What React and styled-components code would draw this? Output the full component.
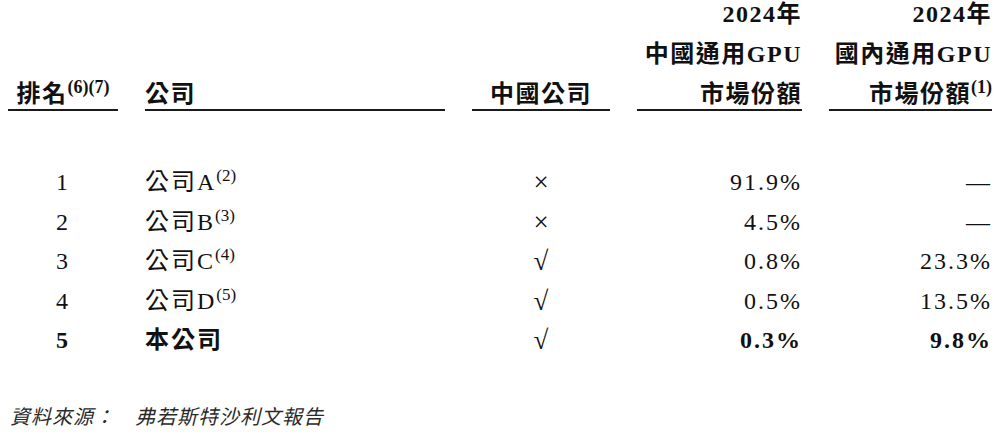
import styled, { createGlobalStyle } from "styled-components"

const GlobalStyle = createGlobalStyle`
    html, body {
        margin: 0;
        padding: 0;
        background: #ffffff;
    }
    body {
        font-family: "Liberation Serif", "Noto Sans CJK TC", serif;
        color: #111111;
    }
`

const columns = "110px 300px 138px 165px 163px"

const rows = [
    { rank: "1", name: "公司A", note: "(2)", mark: "×", china: "91.9%", domestic: "—" },
    { rank: "2", name: "公司B", note: "(3)", mark: "×", china: "4.5%", domestic: "—" },
    { rank: "3", name: "公司C", note: "(4)", mark: "√", china: "0.8%", domestic: "23.3%" },
    { rank: "4", name: "公司D", note: "(5)", mark: "√", china: "0.5%", domestic: "13.5%" },
    { rank: "5", name: "本公司", mark: "√", china: "0.3%", domestic: "9.8%", bold: true },
]

export default function App() {
    return (
        <>
            <GlobalStyle />
            <Page>
                <HeadRow>
                    <HeadCell $align="center">
                        <HeadLine>排名<Sup $head>(6)(7)</Sup></HeadLine>
                    </HeadCell>
                    <HeadCell $align="left">
                        <HeadLine>公司</HeadLine>
                    </HeadCell>
                    <HeadCell $align="center">
                        <HeadLine>中國公司</HeadLine>
                    </HeadCell>
                    <HeadCell $align="right">
                        <HeadLine>2024年</HeadLine>
                        <HeadLine>中國通用GPU</HeadLine>
                        <HeadLine>市場份額</HeadLine>
                    </HeadCell>
                    <HeadCell $align="right">
                        <HeadLine>2024年</HeadLine>
                        <HeadLine>國內通用GPU</HeadLine>
                        <HeadLine>市場份額<Sup $head>(1)</Sup></HeadLine>
                    </HeadCell>
                </HeadRow>
                <Body>
                    {rows.map((r) => (
                        <Row key={r.rank}>
                            <Cell $align="center" $bold={r.bold}>{r.rank}</Cell>
                            <Cell $align="left" $bold={r.bold}>
                                {r.name}
                                {r.note && <Sup>{r.note}</Sup>}
                            </Cell>
                            <Mark>{r.mark}</Mark>
                            <Cell $align="right" $bold={r.bold}>{r.china}</Cell>
                            <Cell $align="right" $bold={r.bold}>{r.domestic}</Cell>
                        </Row>
                    ))}
                </Body>
                <Source>
                    資料來源：<SourceName>弗若斯特沙利文報告</SourceName>
                </Source>
            </Page>
        </>
    )
}

const Page = styled.div`
    width: 1000px;
    height: 444px;
    padding: 0 8px;
    box-sizing: border-box;
    overflow: hidden;
`

const HeadRow = styled.div`
    display: grid;
    grid-template-columns: ${columns};
    column-gap: 27px;
    align-items: end;
    margin-top: -6px;
`

const HeadCell = styled.div`
    display: flex;
    flex-direction: column;
    align-items: ${({ $align }) =>
        $align === "right" ? "flex-end" : $align === "center" ? "center" : "flex-start"};
    border-bottom: 2px solid #1a1a1a;

    & > :last-child {
        margin-bottom: -5px;
    }
`

const HeadLine = styled.span`
    display: block;
    font-size: 24px;
    font-weight: bold;
    line-height: 40px;
    letter-spacing: 1.5px;
    white-space: nowrap;
`

const Sup = styled.sup`
    font-size: ${({ $head }) => ($head ? "18px" : "17px")};
    font-weight: ${({ $head }) => ($head ? "bold" : "normal")};
    letter-spacing: 0;
    line-height: 0;
    vertical-align: 0;
    position: relative;
    top: -9px;
    margin-left: 0;
`

const Body = styled.div`
    padding-top: 52px;
`

const Row = styled.div`
    display: grid;
    grid-template-columns: ${columns};
    column-gap: 27px;
    height: 39.5px;
`

const Cell = styled.div`
    text-align: ${({ $align }) => $align};
    font-size: 24px;
    font-weight: ${({ $bold }) => ($bold ? "bold" : "normal")};
    line-height: 39.5px;
    letter-spacing: 2px;
    white-space: nowrap;
`

const Mark = styled.div`
    text-align: center;
    font-size: 27px;
    line-height: 39.5px;
`

const Source = styled.div`
    margin-top: 36px;
    padding-left: 2px;
    font-size: 20px;
    font-style: italic;
    line-height: 40px;
    letter-spacing: 1px;
    color: #2a2a2a;
`

const SourceName = styled.span`
    margin-left: 20px;
`
